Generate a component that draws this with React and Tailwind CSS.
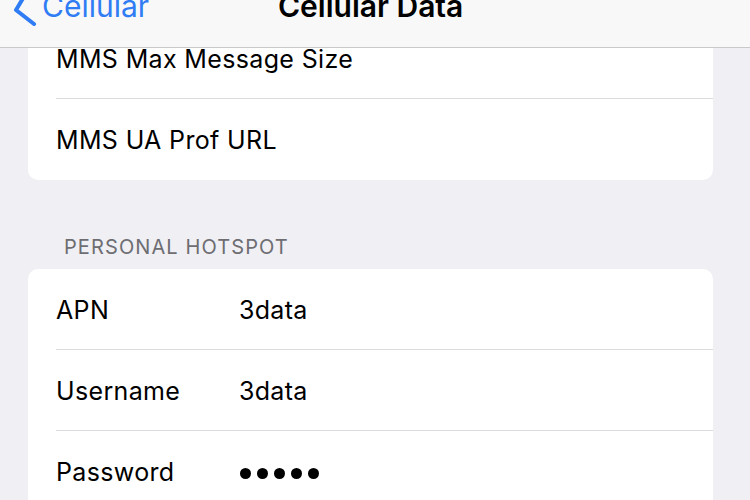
import React from 'react';

const font = { fontFamily: 'Inter, "Liberation Sans", sans-serif' };

const Row = ({ label, value, last, children }) => (
  <div className="flex items-center h-[81px] pl-[28px]">
    <div className={`flex items-center h-full flex-1 pt-[3px] ${last ? '' : 'border-b border-[#dcdce0]'}`}>
      <span className="min-w-[183px] whitespace-nowrap text-[25px] text-black tracking-[0.35px]">{label}</span>
      {value && <span className="text-[25px] text-black tracking-[0.3px]">{value}</span>}
      {children}
    </div>
  </div>
);

const App = () => {
  return (
    <div className="w-[750px] h-[500px] overflow-hidden bg-[#efeff4] flex flex-col" style={font}>
      <div className="h-[48px] shrink-0 bg-[#f8f8f8] border-b border-[#c9c9cc] flex items-start relative z-10 overflow-hidden">
        <div className="flex items-start -mt-[9px] w-full">
          <div className="flex items-start w-[258px]">
            <svg width="40" height="40" viewBox="0 0 40 40" className="ml-[5px] -mt-[3px]">
              <path d="M23 2 L11 22 L29 36" fill="none" stroke="#2f7cf5" strokeWidth="4" strokeLinecap="round" strokeLinejoin="round" />
            </svg>
            <span className="text-[30px] leading-[30px] text-[#2f7cf5] -ml-[3px]">Cellular</span>
          </div>
          <span className="text-[30px] leading-[30px] font-semibold text-black ml-[20px]">Cellular Data</span>
        </div>
      </div>

      <div className="flex-1 overflow-hidden">
        <div className="mx-[28px] w-[685px] bg-white rounded-b-[10px] -mt-[30px]">
          <Row label="MMS Max Message Size" />
          <Row label="MMS UA Prof URL" last />
        </div>

        <div className="h-[89px] flex items-end pb-[7px] pl-[64px]">
          <span className="text-[20px] text-[#6d6d72] tracking-[1.1px]">PERSONAL HOTSPOT</span>
        </div>

        <div className="mx-[28px] w-[685px] bg-white rounded-t-[10px]">
          <Row label="APN" value="3data" />
          <Row label="Username" value="3data" />
          <Row label="Password" last>
            <div className="flex gap-[6px] items-center ml-[1px]">
              <span className="w-[11px] h-[11px] rounded-full bg-black" />
              <span className="w-[11px] h-[11px] rounded-full bg-black" />
              <span className="w-[11px] h-[11px] rounded-full bg-black" />
              <span className="w-[11px] h-[11px] rounded-full bg-black" />
              <span className="w-[11px] h-[11px] rounded-full bg-black" />
            </div>
          </Row>
        </div>
      </div>
    </div>
  );
};

export default App;
